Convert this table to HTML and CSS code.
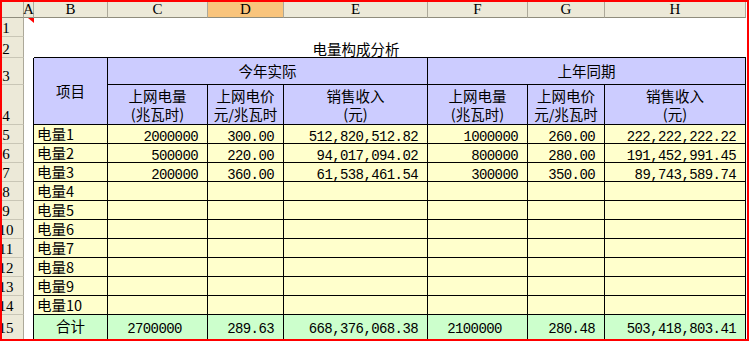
FILE: index.html
```html
<!DOCTYPE html>
<html lang="zh-CN">
<head>
<meta charset="utf-8">
<title>电量构成分析</title>
<link rel="stylesheet" href="styles.css">
</head>
<body>
<div class="sheet">
  <div class="grid">
    <!-- column headers -->
    <div class="ch corner"></div>
    <div class="ch">A</div>
    <div class="ch">B</div>
    <div class="ch">C</div>
    <div class="ch sel">D</div>
    <div class="ch">E</div>
    <div class="ch">F</div>
    <div class="ch">G</div>
    <div class="ch">H</div>

    <!-- row 1 -->
    <div class="rh"><span>1</span></div>
    <div class="c a1"><span class="note"></span></div>
    <div class="c"></div><div class="c"></div><div class="c"></div><div class="c"></div>
    <div class="c"></div><div class="c"></div><div class="c"></div>

    <!-- row 2 -->
    <div class="rh"><span>2</span></div>
    <div class="c"></div>
    <div class="c tb"></div><div class="c tb"></div><div class="c tb"></div>
    <div class="c tb title">电量构成分析</div>
    <div class="c tb"></div><div class="c tb"></div><div class="c tb"></div>

    <!-- row 3 -->
    <div class="rh"><span>3</span></div>
    <div class="c ta"></div>
    <div class="t hd span-r">项目</div>
    <div class="t hd span-c">今年实际</div>
    <div class="t hd span-c">上年同期</div>

    <!-- row 4 -->
    <div class="rh"><span>4</span></div>
    <div class="c ta"></div>
    <div class="t hd two"><span>上网电量</span><span>(兆瓦时)</span></div>
    <div class="t hd two"><span>上网电价</span><span>元/兆瓦时</span></div>
    <div class="t hd two"><span>销售收入</span><span>(元)</span></div>
    <div class="t hd two"><span>上网电量</span><span>(兆瓦时)</span></div>
    <div class="t hd two"><span>上网电价</span><span>元/兆瓦时</span></div>
    <div class="t hd two"><span>销售收入</span><span>(元)</span></div>

    <!-- row 5 -->
    <div class="rh"><span>5</span></div>
    <div class="c ta"></div>
    <div class="t y lbl">电量1</div>
    <div class="t y n">2000000</div>
    <div class="t y n">300.00</div>
    <div class="t y n">512,820,512.82</div>
    <div class="t y n">1000000</div>
    <div class="t y n">260.00</div>
    <div class="t y n">222,222,222.22</div>

    <!-- row 6 -->
    <div class="rh"><span>6</span></div>
    <div class="c ta"></div>
    <div class="t y lbl">电量2</div>
    <div class="t y n">500000</div>
    <div class="t y n">220.00</div>
    <div class="t y n">94,017,094.02</div>
    <div class="t y n">800000</div>
    <div class="t y n">280.00</div>
    <div class="t y n">191,452,991.45</div>

    <!-- row 7 -->
    <div class="rh"><span>7</span></div>
    <div class="c ta"></div>
    <div class="t y lbl">电量3</div>
    <div class="t y n">200000</div>
    <div class="t y n">360.00</div>
    <div class="t y n">61,538,461.54</div>
    <div class="t y n">300000</div>
    <div class="t y n">350.00</div>
    <div class="t y n">89,743,589.74</div>

    <!-- row 8 -->
    <div class="rh"><span>8</span></div>
    <div class="c ta"></div>
    <div class="t y lbl">电量4</div>
    <div class="t y"></div><div class="t y"></div><div class="t y"></div>
    <div class="t y"></div><div class="t y"></div><div class="t y"></div>

    <!-- row 9 -->
    <div class="rh"><span>9</span></div>
    <div class="c ta"></div>
    <div class="t y lbl">电量5</div>
    <div class="t y"></div><div class="t y"></div><div class="t y"></div>
    <div class="t y"></div><div class="t y"></div><div class="t y"></div>

    <!-- row 10 -->
    <div class="rh"><span>10</span></div>
    <div class="c ta"></div>
    <div class="t y lbl">电量6</div>
    <div class="t y"></div><div class="t y"></div><div class="t y"></div>
    <div class="t y"></div><div class="t y"></div><div class="t y"></div>

    <!-- row 11 -->
    <div class="rh"><span>11</span></div>
    <div class="c ta"></div>
    <div class="t y lbl">电量7</div>
    <div class="t y"></div><div class="t y"></div><div class="t y"></div>
    <div class="t y"></div><div class="t y"></div><div class="t y"></div>

    <!-- row 12 -->
    <div class="rh"><span>12</span></div>
    <div class="c ta"></div>
    <div class="t y lbl">电量8</div>
    <div class="t y"></div><div class="t y"></div><div class="t y"></div>
    <div class="t y"></div><div class="t y"></div><div class="t y"></div>

    <!-- row 13 -->
    <div class="rh"><span>13</span></div>
    <div class="c ta"></div>
    <div class="t y lbl">电量9</div>
    <div class="t y"></div><div class="t y"></div><div class="t y"></div>
    <div class="t y"></div><div class="t y"></div><div class="t y"></div>

    <!-- row 14 -->
    <div class="rh"><span>14</span></div>
    <div class="c ta"></div>
    <div class="t y lbl">电量10</div>
    <div class="t y"></div><div class="t y"></div><div class="t y"></div>
    <div class="t y"></div><div class="t y"></div><div class="t y"></div>

    <!-- row 15 -->
    <div class="rh last"><span>15</span></div>
    <div class="c ta"></div>
    <div class="t g last mid-txt">合计</div>
    <div class="t g last n mid">2700000</div>
    <div class="t g last n">289.63</div>
    <div class="t g last n">668,376,068.38</div>
    <div class="t g last n mid">2100000</div>
    <div class="t g last n">280.48</div>
    <div class="t g last n">503,418,803.41</div>
  </div>
</div>
</body>
</html>
```

FILE: styles.css
```css
* {
  box-sizing: border-box;
}

html, body {
  margin: 0;
  padding: 0;
  background: #ffffff;
}

.sheet {
  width: 749px;
  height: 341px;
  border: 2px solid #ff0000;
  overflow: hidden;
  background: #ffffff;
  font-family: "Noto Sans CJK SC", "Noto Sans", sans-serif;
  font-size: 14.5px;
  color: #000000;
}

.grid {
  display: grid;
  grid-template-columns: 22px 10px 74px 100px 76px 144px 100px 77px 141px;
  grid-template-rows: 16px 19px 21px 27px 40px repeat(10, 19px) 24px;
}

/* column headers */
.ch {
  background: #ece9d8;
  border-right: 1px solid #aca899;
  border-bottom: 1px solid #8f8c7c;
  font-family: "Liberation Serif", serif;
  font-size: 15px;
  line-height: 15px;
  display: flex;
  align-items: center;
  justify-content: center;
}

.ch.sel {
  background: #f9c47c;
}

/* row headers */
.rh {
  background: #ece9d8;
  border-right: 1px solid #aca899;
  border-bottom: 1px solid #c9c6b6;
  font-family: "Liberation Serif", serif;
  font-size: 15px;
  line-height: 15px;
  display: flex;
  align-items: flex-end;
  justify-content: center;
  padding-right: 13px;
}

.rh span {
  flex: none;
}

.rh.last {
  border-bottom: none;
  padding-bottom: 3px;
}

/* plain sheet cells */
.c {
  position: relative;
}

.c.tb {
  border-bottom: 1px solid #000000;
}

.c.ta {
  border-right: 1px solid #000000;
}

.title {
  display: flex;
  align-items: flex-end;
  justify-content: center;
  line-height: 16px;
  white-space: nowrap;
}

.note {
  position: absolute;
  top: 0;
  right: 0;
  width: 6px;
  height: 5px;
  background: #ff0000;
  clip-path: polygon(0 0, 100% 0, 100% 100%);
}

/* table cells */
.t {
  border-right: 1px solid #000000;
  border-bottom: 1px solid #000000;
  display: flex;
  flex-direction: column;
  justify-content: flex-end;
  line-height: 18px;
  white-space: nowrap;
}

.t.last {
  border-bottom: none;
  padding-bottom: 4px;
}

.hd {
  background: #ccccff;
  justify-content: center;
  text-align: center;
}

.hd.two span {
  display: block;
  height: 18px;
  line-height: 17px;
}

.span-r {
  grid-row: span 2;
}

.span-c {
  grid-column: span 3;
}

.y {
  background: #ffffcc;
}

.g {
  background: #ccffcc;
}

.lbl {
  padding-left: 3px;
  text-align: left;
}

.mid-txt {
  text-align: center;
}

.n {
  font-family: "Liberation Mono", "DejaVu Sans Mono", monospace;
  font-size: 14px;
  letter-spacing: -0.6px;
  line-height: 12px;
  text-align: right;
  padding-right: 9px;
}

.n.mid {
  text-align: center;
  padding-right: 6px;
}
```
